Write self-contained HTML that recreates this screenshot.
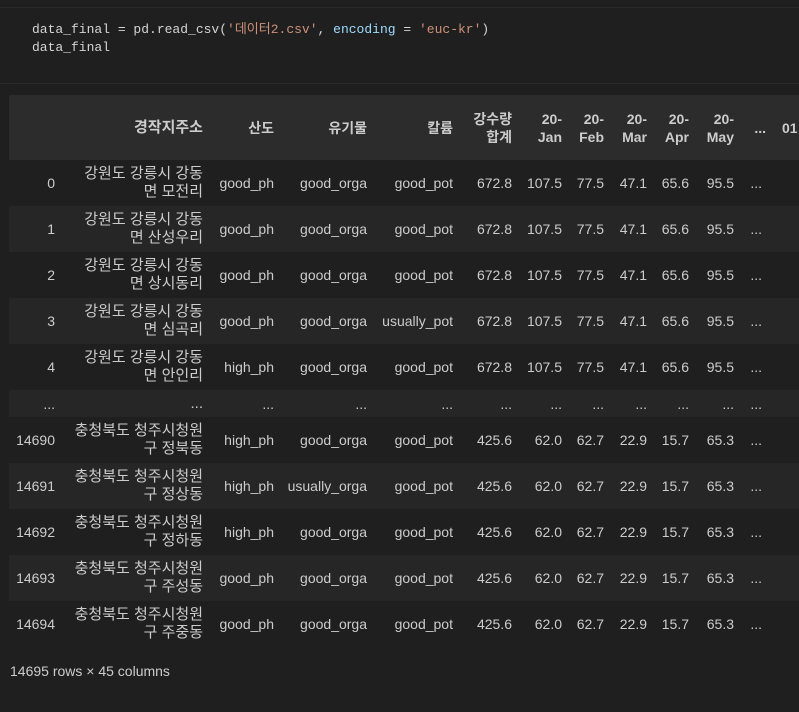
<!DOCTYPE html>
<html><head><meta charset="utf-8"><style>
body{margin:0;width:799px;height:712px;background:#1f1f1f;overflow:hidden;position:relative;font-family:"Liberation Sans","Noto Sans CJK KR",sans-serif;font-size:14px;color:#cccccc}
.code{position:absolute;left:0;top:7px;width:799px;height:75px;border-top:1px solid #2b2b2b;border-bottom:1px solid #2b2b2b;background:#1f1f1f}
.code pre{margin:0;position:absolute;left:32px;top:13px;font-family:"Liberation Mono","Noto Sans CJK KR",monospace;font-size:13px;line-height:18px;color:#d4d4d4}
.s{color:#ce9178}.k{color:#9cdcfe}
.r{position:absolute;left:9px;width:790px;height:46px}
.r.l{background:#262626}
.r.h{background:#2c2c2c;height:65px;top:95px;font-weight:bold}
.r span{position:absolute;top:0;height:100%;display:flex;align-items:center;justify-content:flex-end;text-align:right;line-height:18px;white-space:nowrap}
.b{font-size:15px}
.a{right:744px}.b{right:596px}.c{right:525px}.d{right:432px}.e{right:346px}.f{right:287px}.g{right:237px}.i{right:195px}.j{right:152px}.m{right:110px}.n{right:65px}.o{right:37px}.p{left:773px;justify-content:flex-start!important}
.h .o{right:33px}
.dots{height:27px}
.foot{position:absolute;left:10px;top:663px}
</style></head><body>
<div class="code"><pre>data_final = pd.read_csv(<span class="s">'데이터2.csv'</span>, <span class="k">encoding</span> = <span class="s">'euc-kr'</span>)
data_final</pre></div>

<div class="r h"><span class="b">경작지주소</span><span class="c">산도</span><span class="d">유기물</span><span class="e">칼륨</span><span class="f">강수량<br>합계</span><span class="g">20-<br>Jan</span><span class="i">20-<br>Feb</span><span class="j">20-<br>Mar</span><span class="m">20-<br>Apr</span><span class="n">20-<br>May</span><span class="o">...</span><span class="p">01</span></div>

<div class="r" style="top:160px"><span class="a">0</span><span class="b">강원도 강릉시 강동<br>면 모전리</span><span class="c">good_ph</span><span class="d">good_orga</span><span class="e">good_pot</span><span class="f">672.8</span><span class="g">107.5</span><span class="i">77.5</span><span class="j">47.1</span><span class="m">65.6</span><span class="n">95.5</span><span class="o">...</span></div>
<div class="r l" style="top:206px"><span class="a">1</span><span class="b">강원도 강릉시 강동<br>면 산성우리</span><span class="c">good_ph</span><span class="d">good_orga</span><span class="e">good_pot</span><span class="f">672.8</span><span class="g">107.5</span><span class="i">77.5</span><span class="j">47.1</span><span class="m">65.6</span><span class="n">95.5</span><span class="o">...</span></div>
<div class="r" style="top:252px"><span class="a">2</span><span class="b">강원도 강릉시 강동<br>면 상시동리</span><span class="c">good_ph</span><span class="d">good_orga</span><span class="e">good_pot</span><span class="f">672.8</span><span class="g">107.5</span><span class="i">77.5</span><span class="j">47.1</span><span class="m">65.6</span><span class="n">95.5</span><span class="o">...</span></div>
<div class="r l" style="top:298px"><span class="a">3</span><span class="b">강원도 강릉시 강동<br>면 심곡리</span><span class="c">good_ph</span><span class="d">good_orga</span><span class="e">usually_pot</span><span class="f">672.8</span><span class="g">107.5</span><span class="i">77.5</span><span class="j">47.1</span><span class="m">65.6</span><span class="n">95.5</span><span class="o">...</span></div>
<div class="r" style="top:344px"><span class="a">4</span><span class="b">강원도 강릉시 강동<br>면 안인리</span><span class="c">high_ph</span><span class="d">good_orga</span><span class="e">good_pot</span><span class="f">672.8</span><span class="g">107.5</span><span class="i">77.5</span><span class="j">47.1</span><span class="m">65.6</span><span class="n">95.5</span><span class="o">...</span></div>
<div class="r l dots" style="top:390px"><span class="a">...</span><span class="b">...</span><span class="c">...</span><span class="d">...</span><span class="e">...</span><span class="f">...</span><span class="g">...</span><span class="i">...</span><span class="j">...</span><span class="m">...</span><span class="n">...</span><span class="o">...</span></div>
<div class="r" style="top:417px"><span class="a">14690</span><span class="b">충청북도 청주시청원<br>구 정북동</span><span class="c">high_ph</span><span class="d">good_orga</span><span class="e">good_pot</span><span class="f">425.6</span><span class="g">62.0</span><span class="i">62.7</span><span class="j">22.9</span><span class="m">15.7</span><span class="n">65.3</span><span class="o">...</span></div>
<div class="r l" style="top:463px"><span class="a">14691</span><span class="b">충청북도 청주시청원<br>구 정상동</span><span class="c">high_ph</span><span class="d">usually_orga</span><span class="e">good_pot</span><span class="f">425.6</span><span class="g">62.0</span><span class="i">62.7</span><span class="j">22.9</span><span class="m">15.7</span><span class="n">65.3</span><span class="o">...</span></div>
<div class="r" style="top:509px"><span class="a">14692</span><span class="b">충청북도 청주시청원<br>구 정하동</span><span class="c">high_ph</span><span class="d">good_orga</span><span class="e">good_pot</span><span class="f">425.6</span><span class="g">62.0</span><span class="i">62.7</span><span class="j">22.9</span><span class="m">15.7</span><span class="n">65.3</span><span class="o">...</span></div>
<div class="r l" style="top:555px"><span class="a">14693</span><span class="b">충청북도 청주시청원<br>구 주성동</span><span class="c">good_ph</span><span class="d">good_orga</span><span class="e">good_pot</span><span class="f">425.6</span><span class="g">62.0</span><span class="i">62.7</span><span class="j">22.9</span><span class="m">15.7</span><span class="n">65.3</span><span class="o">...</span></div>
<div class="r" style="top:601px"><span class="a">14694</span><span class="b">충청북도 청주시청원<br>구 주중동</span><span class="c">good_ph</span><span class="d">good_orga</span><span class="e">good_pot</span><span class="f">425.6</span><span class="g">62.0</span><span class="i">62.7</span><span class="j">22.9</span><span class="m">15.7</span><span class="n">65.3</span><span class="o">...</span></div>

<div class="foot">14695 rows × 45 columns</div>
</body></html>
